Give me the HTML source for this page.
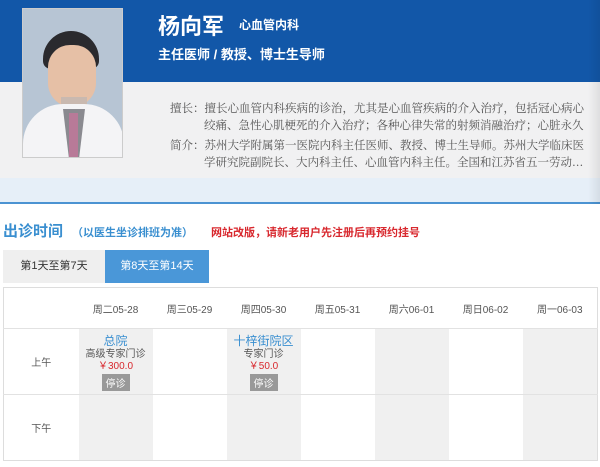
<!DOCTYPE html>
<html><head><meta charset="utf-8"><style>
*{margin:0;padding:0;box-sizing:border-box}
body{width:600px;height:467px;overflow:hidden;background:#fff;font-family:"Liberation Sans","Noto Sans CJK SC",sans-serif;position:relative}
.abs{position:absolute}
#hdr{left:0;top:0;width:600px;height:82px;background:#1257a8}
#gray{left:0;top:82px;width:600px;height:96px;background:#f1f1f2}
#lb{left:0;top:178px;width:600px;height:24px;background:#e6eff8}
#line{left:0;top:202px;width:600px;height:2px;background:#4b93d2}
#rs{left:588px;top:0;width:12px;height:204px;background:linear-gradient(90deg,rgba(0,0,0,0),rgba(0,0,0,.08))}
#photo{left:22px;top:8px;width:101px;height:150px;background:#b7c5d4;overflow:hidden;border:1px solid #ccc}
.t{white-space:nowrap}
table{border-collapse:collapse;position:absolute;left:3px;top:287px;width:594px;border:1px solid #ddd;table-layout:fixed}
td{border-top:1px solid #e2e2e2;text-align:center;font-size:10px;color:#555;vertical-align:middle}
.g{background:#f0f0f0}
</style></head><body>
<div id="hdr" class="abs"></div>
<div id="gray" class="abs"></div>
<div id="lb" class="abs"></div>
<div id="line" class="abs"></div>
<div id="rs" class="abs"></div>
<div id="photo" class="abs">
<div class="abs" style="left:20px;top:22px;width:56px;height:38px;border-radius:28px 28px 8px 8px;background:#2a2a2e"></div>
<div class="abs" style="left:25px;top:36px;width:48px;height:62px;border-radius:22px 22px 24px 24px;background:#e6c0a6"></div>
<div class="abs" style="left:38px;top:88px;width:26px;height:30px;background:#c9b9b0"></div>
<div class="abs" style="left:0;top:95px;width:101px;height:60px;border-radius:40px 40px 0 0;background:#f4f4f6"></div>
<div class="abs" style="left:40px;top:100px;width:22px;height:55px;background:#8a8a90;clip-path:polygon(0 0,100% 0,70% 100%,30% 100%)"></div>
<div class="abs" style="left:46px;top:104px;width:9px;height:50px;background:#b87a98"></div>
</div>
<div class="abs t" style="left:158px;top:9px;font-size:22px;font-weight:bold;color:#fff">杨向军</div>
<div class="abs t" style="left:239px;top:16px;font-size:12px;font-weight:bold;color:#fff">心血管内科</div>
<div class="abs t" style="left:158px;top:44px;font-size:13px;font-weight:bold;color:#fff">主任医师 / 教授、博士生导师</div>
<div class="abs" style="left:170px;top:100px;font-size:11.5px;line-height:17px;color:#555;font-family:'Noto Serif CJK SC',serif">
<div class="t">擅长：擅长心血管内科疾病的诊治，尤其是心血管疾病的介入治疗，包括冠心病心</div>
<div class="t" style="padding-left:34px">绞痛、急性心肌梗死的介入治疗；各种心律失常的射频消融治疗；心脏永久</div>
<div class="t" style="margin-top:3px">简介：苏州大学附属第一医院内科主任医师、教授、博士生导师。苏州大学临床医</div>
<div class="t" style="padding-left:34px">学研究院副院长、大内科主任、心血管内科主任。全国和江苏省五一劳动...</div>
</div>
<div class="abs t" style="left:3px;top:220px;font-size:15px;font-weight:bold;color:#3a8fd0">出诊时间</div>
<div class="abs t" style="left:72px;top:224px;font-size:11px;font-weight:bold;color:#3a8fd0">（以医生坐诊排班为准）</div>
<div class="abs t" style="left:211px;top:224px;font-size:11px;font-weight:bold;color:#d8282e">网站改版，请新老用户先注册后再预约挂号</div>
<div class="abs" style="left:3px;top:250px;width:102px;height:33px;background:#efefef;font-size:11px;color:#333;text-align:center;line-height:33px">第1天至第7天</div>
<div class="abs" style="left:105px;top:250px;width:104px;height:33px;background:#4a97d8;font-size:11px;color:#fff;text-align:center;line-height:33px">第8天至第14天</div>
<table>
<colgroup><col style="width:75px"><col style="width:74px"><col style="width:74px"><col style="width:74px"><col style="width:74px"><col style="width:74px"><col style="width:74px"><col style="width:75px"></colgroup>
<tr style="height:41px"><td style="border:0"></td><td style="border:0">周二05-28</td><td style="border:0">周三05-29</td><td style="border:0">周四05-30</td><td style="border:0">周五05-31</td><td style="border:0">周六06-01</td><td style="border:0">周日06-02</td><td style="border:0">周一06-03</td></tr>
<tr style="height:66px"><td>上午</td>
<td class="g"><div style="color:#3a8fd0;font-size:12px">总院</div><div style="line-height:12px">高级专家门诊</div><div style="color:#d8282e;line-height:12px">￥300.0</div><div style="display:inline-block;background:#999;color:#fff;padding:1px 4px;margin-top:1px">停诊</div></td>
<td></td>
<td class="g"><div style="color:#3a8fd0;font-size:12px">十梓街院区</div><div style="line-height:12px">专家门诊</div><div style="color:#d8282e;line-height:12px">￥50.0</div><div style="display:inline-block;background:#999;color:#fff;padding:1px 4px;margin-top:1px">停诊</div></td>
<td></td><td class="g"></td><td></td><td class="g"></td></tr>
<tr style="height:66px"><td>下午</td><td class="g"></td><td></td><td class="g"></td><td></td><td class="g"></td><td></td><td class="g"></td></tr>
</table>
</body></html>
